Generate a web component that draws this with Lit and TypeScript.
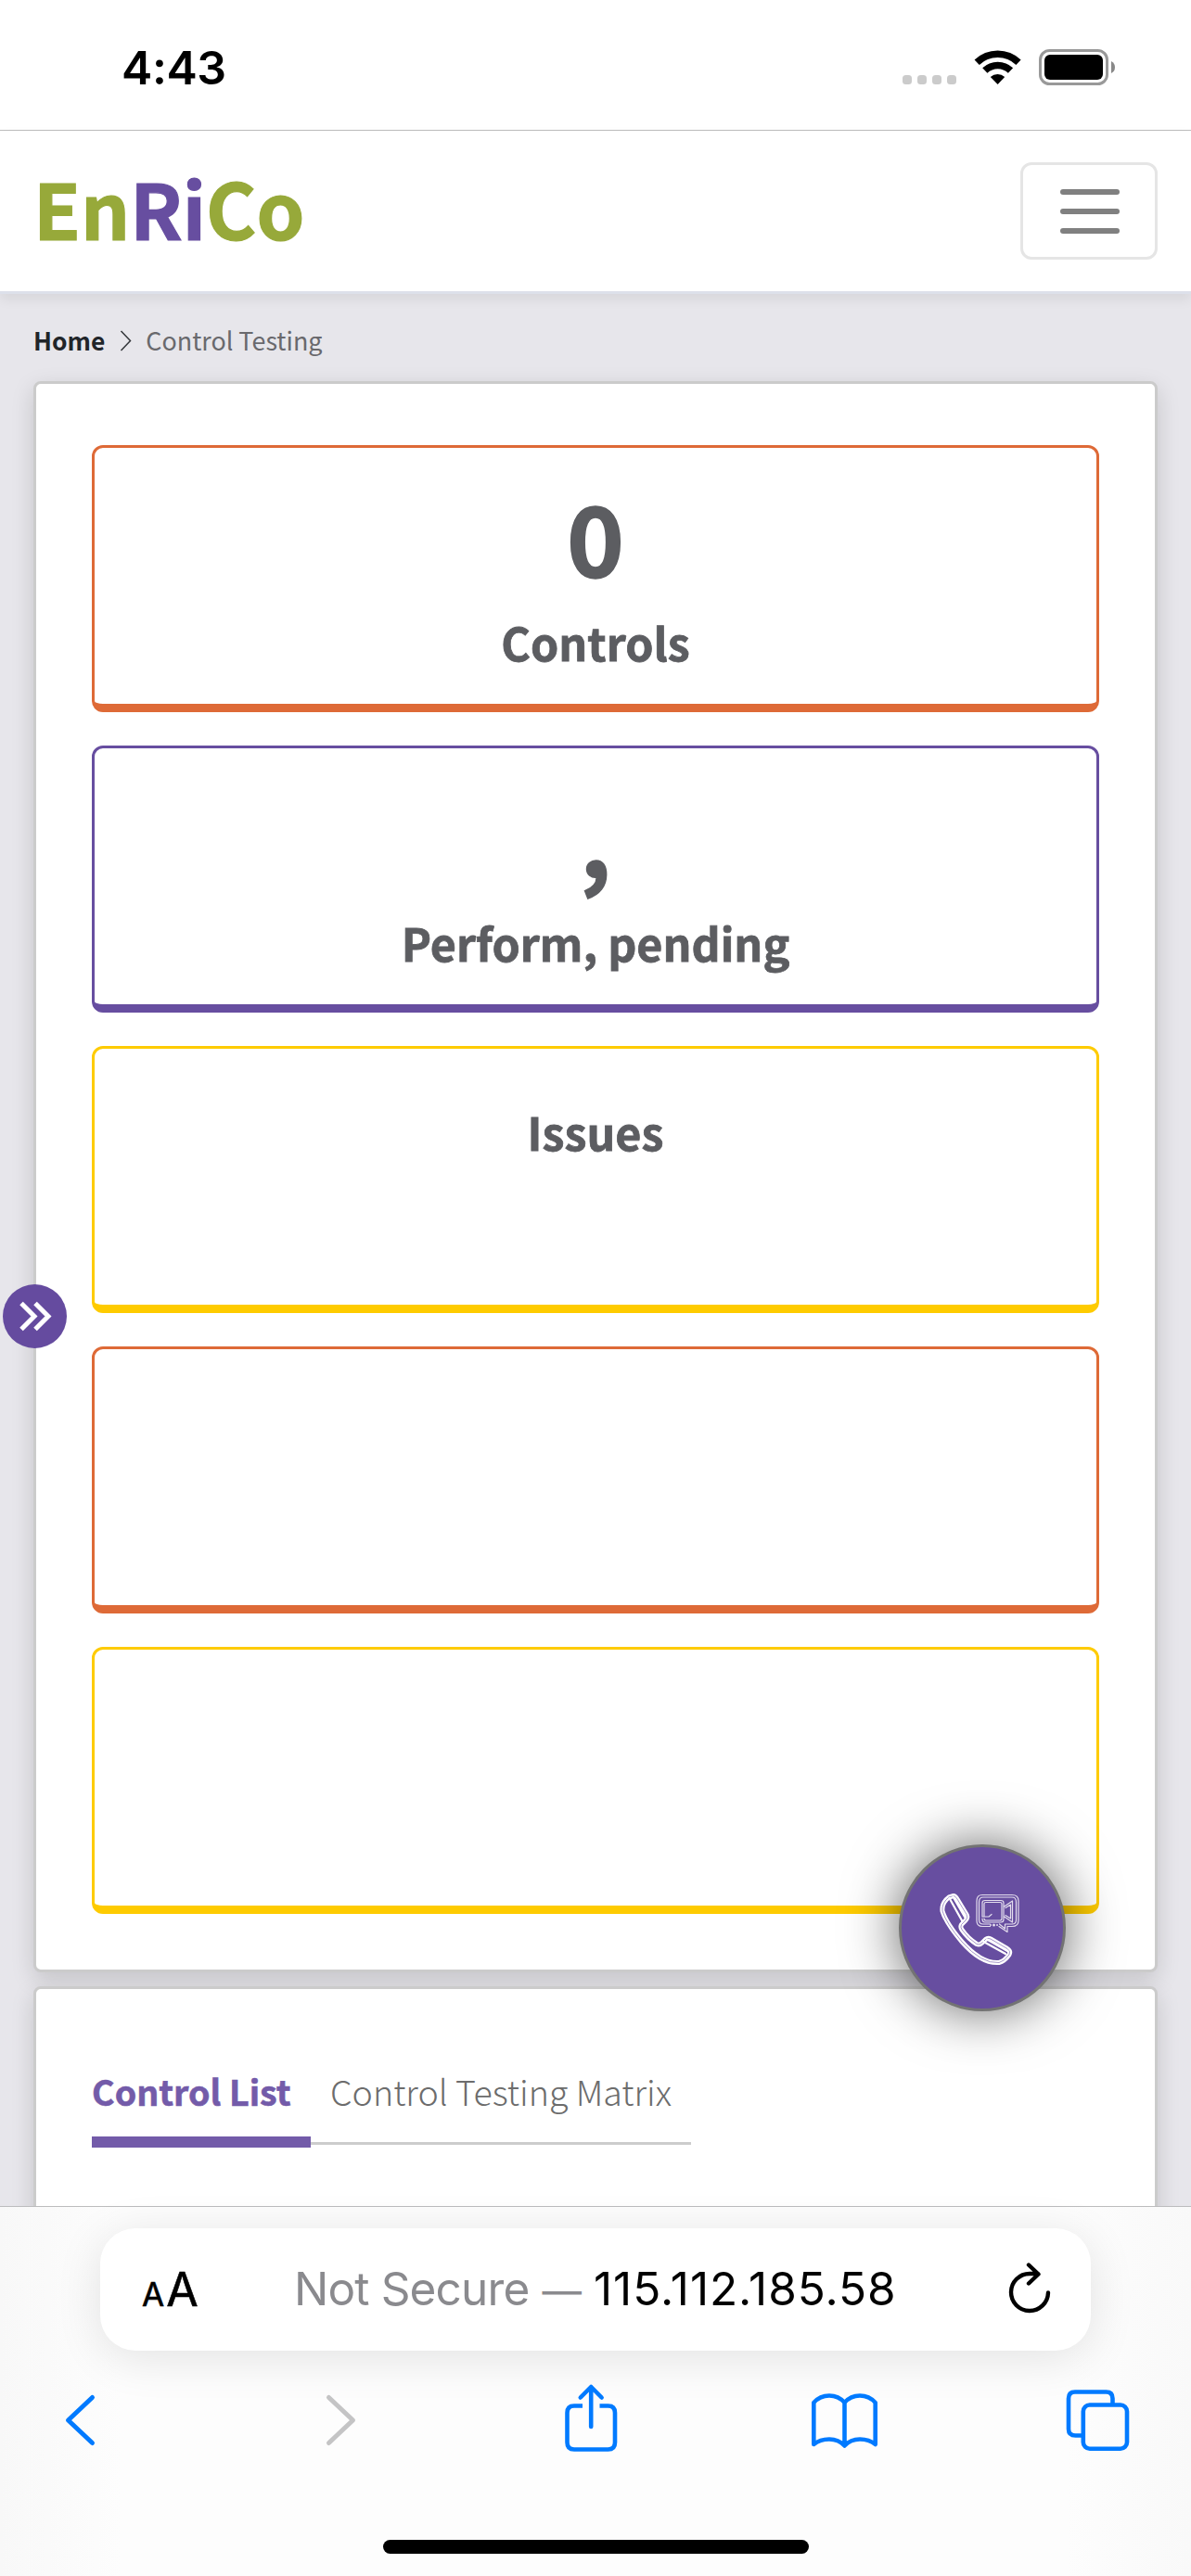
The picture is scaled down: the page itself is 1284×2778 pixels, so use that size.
import { LitElement, html, css, svg } from "lit";
import { customElement } from "lit/decorators.js";

interface Tile { tone: string; value: string; label: string; }

const tiles: Tile[] = [
  { tone: "orange", value: "0", label: "Controls" },
  { tone: "purple", value: ",", label: "Perform, pending" },
  { tone: "yellow", value: "", label: "Issues" },
  { tone: "orange", value: "", label: "" },
  { tone: "yellow", value: "", label: "" },
];

@customElement("status-bar")
export class StatusBar extends LitElement {
  static styles = css`
    :host { display: flex; box-sizing: border-box; height: 141px; border-bottom: 1px solid #bebebe; background: #fff; padding: 0 81px 0 131px; justify-content: space-between; align-items: flex-start; }
    .time { font: 600 50px/60px Inter, "Liberation Sans", sans-serif; color: #000; margin-top: 43px; letter-spacing: -0.4px; }
    svg { display: block; margin-top: 50px; }
  `;
  render() {
    return html`
      <div class="time">4:43</div>
      <svg width="231" height="44" viewBox="972 50 231 44">
        <g fill="#cbcbcb">
          ${[973, 989, 1005, 1021].map((x) => svg`<rect x=${x} y="81" width="10" height="10" rx="3.500" />`)}
        </g>
        <g fill="none" stroke="#000" stroke-width="7.600">
          <path d="M1053.2 67.2A32.5 32.5 0 0 1 1098 67.2" />
          <path d="M1061.8 76.1A20 20 0 0 1 1089.500 76.1" />
        </g>
        <path d="M1067.8 83A11.5 11.5 0 0 1 1083.2 83L1075.6 91Z" />
        <rect x="1121.500" y="54.500" width="72" height="36" rx="10" fill="none" stroke="#999" stroke-width="3" />
        <rect x="1126" y="59" width="63" height="27" rx="6" />
        <path d="M1198 66Q1202 68 1202 72.500T1198 79Z" fill="#888" />
      </svg>
    `;
  }
}

@customElement("site-header")
export class SiteHeader extends LitElement {
  static styles = css`
    :host { display: flex; box-sizing: border-box; height: 176px; padding: 0 36px; align-items: center; justify-content: space-between; background: #fff; border-bottom: 3px solid #dde0ea; box-shadow: 0 6px 12px rgba(0, 0, 0, 0.07); position: relative; }
    .logo { font: 700 83px/100px "Noto Sans CJK SC", sans-serif; color: #97a93a; margin-bottom: 10px; -webkit-text-stroke: 1.2px currentColor; }
    .mid { color: #674ea0; }
    .menu { box-sizing: border-box; width: 148px; height: 105px; border: 3px solid #e5e5e5; border-radius: 12px; display: flex; flex-direction: column; gap: 15px; align-items: center; justify-content: center; background: none; padding: 0 0 0 2px; }
    .bar { width: 64px; height: 6px; border-radius: 3px; background: #808080; }
  `;
  render() {
    return html`
      <div class="logo">En<span class="mid">Ri</span>Co</div>
      <button class="menu"><span class="bar"></span><span class="bar"></span><span class="bar"></span></button>
    `;
  }
}

@customElement("summary-tile")
export class SummaryTile extends LitElement {
  static properties = { tile: { attribute: false } };
  declare tile: Tile;
  static styles = css`
    :host { display: block; }
    .tile { box-sizing: border-box; height: 288px; border: 3px solid; border-bottom-width: 9px; border-radius: 12px; padding-top: 44px; text-align: center; font-family: "Noto Sans CJK SC", sans-serif; font-weight: 700; }
    .orange { border-color: #de6a37; }
    .purple { border-color: #674ea0; }
    .yellow { border-color: #fecb00; }
    .text { color: #5c5d61; }
    .value { font-size: 105px; line-height: 100px; height: 120px; -webkit-text-stroke: 1.5px currentColor; }
    .label { font-size: 48.4px; line-height: 90px; height: 90px; -webkit-text-stroke: 0.8px currentColor; }
  `;
  render() {
    const t = this.tile;
    return html`<div class="tile ${t.tone}">
      ${t.value ? html`<div class="text value">${t.value}</div>` : ""}
      ${t.label ? html`<div class="text label">${t.label}</div>` : ""}
    </div>`;
  }
}

@customElement("browser-bar")
export class BrowserBar extends LitElement {
  static styles = css`
    :host { display: block; box-sizing: border-box; height: 399px; border-top: 1px solid #bcbcbe; background: linear-gradient(90deg, #f8f8f8 0, #fdfdfd 130px, #fdfdfd 1150px, #f9f9f9 100%); position: relative; padding-top: 23px; }
    .address { box-sizing: border-box; height: 132px; margin: 0 108px; border-radius: 38px; background: #fff; box-shadow: 0 8px 50px rgba(0, 0, 0, 0.11); display: flex; align-items: center; padding: 0 43px 0 45px; font: 400 49.5px/60px Inter, "Liberation Sans", sans-serif; color: #000; }
    .size { display: flex; align-items: baseline; width: 164px; font-weight: 400; font-size: 50px; gap: 2px; padding-top: 4px; box-sizing: border-box; -webkit-text-stroke: 0.6px #000; }
    .small { font-size: 35px; }
    .url { flex: 1; display: flex; align-items: baseline; white-space: pre; letter-spacing: 0.95px; padding-top: 1px; }
    .muted { color: #8a8a8e; letter-spacing: -0.85px; width: 323px; }
    .dash { font-size: 42.5px; margin-left: 1px; }
    .tools { display: block; }
    .home { width: 459px; height: 15px; border-radius: 8px; background: #000; margin: 84px auto 0; }
  `;
  render() {
    return html`
      <div class="address">
        <div class="size"><span class="small">A</span><span>A</span></div>
        <div class="url"><span class="muted">Not Secure <span class="dash">— </span></span><span>115.112.185.58</span></div>
        <svg width="46" height="58" viewBox="1087 2440 46 58" fill="none" stroke="#000" stroke-width="4.400" stroke-linecap="round" stroke-linejoin="round">
          <path d="M1130 2472.500A20 20 0 1 1 1110 2452H1119M1109 2442.500L1119.500 2452.500L1109 2462.500" />
        </svg>
      </div>
      <svg class="tools" width="1284" height="120" viewBox="0 2535 1284 120" fill="none" stroke="#007aff" stroke-width="4.600" stroke-linecap="round" stroke-linejoin="round">
        <path d="M99.500 2585.500L73.500 2610L99.500 2634.500" stroke-width="5" />
        <path d="M354.500 2585.500L380.500 2610L354.500 2634.500" stroke="#c4c4c5" stroke-width="5" />
        <path d="M628 2594.500H619Q611.500 2594.500 611.500 2602V2634Q611.500 2641.500 619 2641.500H655.500Q663 2641.500 663 2634V2602Q663 2594.500 655.500 2594.500H646.500" stroke-linecap="butt" />
        <path d="M637.200 2617V2574.500M625.800 2585.500L637.200 2574L648.600 2585.500" />
        <path d="M910.500 2591Q904 2583.500 894 2583.500T877.300 2591V2636Q884 2630.500 894 2630.500T910.500 2637.500Q917 2630.500 927 2630.500T943.700 2636V2591Q937 2583.500 927 2583.500T910.500 2591V2637" />
        <path d="M1166 2626.500H1159.500Q1152 2626.500 1152 2619.500V2586.500Q1152 2579.500 1159 2579.500H1192.500Q1199.500 2579.500 1199.500 2586.500V2593" stroke-linecap="butt" />
        <rect x="1167.800" y="2593.500" width="47.200" height="47.200" rx="7" />
      </svg>
      <div class="home"></div>
    `;
  }
}

@customElement("app-root")
export class AppRoot extends LitElement {
  static styles = css`
    :host { display: flex; flex-direction: column; width: 1284px; height: 2778px; overflow: hidden; position: relative; background: #e7e6eb; font-family: "Noto Sans CJK SC", sans-serif; }
    .page { flex: 1; min-height: 0; overflow: hidden; padding: 0 36px; }
    .crumbs { display: flex; align-items: center; height: 94px; padding-top: 6px; box-sizing: border-box; font-size: 26.9px; line-height: 40px; color: #69696d; }
    .home { font-weight: 700; color: #212529; font-size: 26.4px; }
    .sep { margin: 0 15px 0 16px; }
    .card { box-sizing: border-box; border: 3px solid #cbcbcb; border-radius: 8px; background: #fff; box-shadow: 0 8px 24px rgba(0, 0, 0, 0.15); }
    .summary { height: 1716px; padding: 66px 60px 0; display: flex; flex-direction: column; gap: 36px; }
    .lists { height: 420px; margin-top: 15px; padding: 81px 60px; }
    .tabs { display: flex; width: 646px; position: relative; border-bottom: 3px solid #ccc; height: 84px; font-size: 37.6px; line-height: 57px; color: #6c6c6c; font-weight: 300; white-space: nowrap; }
    .tab { width: 236px; box-sizing: border-box; height: 90px; }
    .active { font-weight: 700; color: #735ba9; border-bottom: 12px solid #735ba9; -webkit-text-stroke: 0.6px currentColor; }
    .other { padding-left: 21px; }
    .expand { position: absolute; left: 3px; top: 1385px; }
    .call { position: absolute; left: 969px; top: 1989px; width: 180px; height: 180px; box-sizing: border-box; border: 3px solid #737373; border-radius: 50%; background: #674ea0; box-shadow: 0 0 60px rgba(0, 0, 0, 0.62); }
  `;
  render() {
    return html`
      <status-bar></status-bar>
      <site-header></site-header>
      <main class="page">
        <nav class="crumbs">
          <span class="home">Home</span>
          <svg class="sep" width="13" height="23" viewBox="0 0 13 23" fill="none" stroke="#33363a" stroke-width="1.500"><path d="M1.500 1L11.500 11.500L1.500 22" /></svg>
          <span>Control Testing</span>
        </nav>
        <section class="card summary">
          ${tiles.map((t) => html`<summary-tile .tile=${t}></summary-tile>`)}
        </section>
        <section class="card lists">
          <div class="tabs"><div class="tab active">Control List</div><div class="other">Control Testing Matrix</div></div>
        </section>
      </main>
      <browser-bar></browser-bar>
      <svg class="expand" width="69" height="69" viewBox="0 0 69 69">
        <circle cx="34.500" cy="34.500" r="34.500" fill="#654b9f" />
        <path d="M20 20.500L34 34.500L20 48.500M35 20.500L49 34.500L35 48.500" fill="none" stroke="#fff" stroke-width="5" />
      </svg>
      <div class="call">
        <svg width="174" height="174" viewBox="3 3 174 174" fill="none" stroke="#fff" stroke-linejoin="round" stroke-linecap="round">
          <path stroke-width="5" d="M54 57L59 55.500Q61 55.500 63 59L73 75.500Q75 79 72 82L67.500 86.500Q66 89 68 92Q75 102 84 107.500Q87 109 90 106L93.500 102.500Q96 100.500 99 102L117 112.500Q121 115 119 119Q114 126 108 127.500Q89 129 68 105Q51 85 47 72Q46 63 54 57Z" />
          <path stroke="#9b8bc2" stroke-width="0.900" d="M54 57L59 55.500Q61 55.500 63 59L73 75.500Q75 79 72 82L67.500 86.500Q66 89 68 92Q75 102 84 107.500Q87 109 90 106L93.500 102.500Q96 100.500 99 102L117 112.500Q121 115 119 119Q114 126 108 127.500Q89 129 68 105Q51 85 47 72Q46 63 54 57Z" />
          <path stroke-width="2.200" d="M54.500 58L68.500 83M58.500 56.500L71.500 79M91.500 105L115 118M95 102.500L118 115.500" />
          <g stroke="#e3dded" stroke-width="1.200">
            <path d="M98.500 88.500H90Q84 88.500 84 82.500V61Q84 54.500 90 54.500H122Q129 54.500 129 61V82Q129 88.500 122 88.500H117L117 94.500L108 88.500" />
            <path d="M98.500 86H91Q86.500 86 86.500 81.500V62Q86.500 57 91 57H122Q126.500 57 126.500 62V81.500Q126.500 86 122 86H114.500V91L108.500 86" />
            <path d="M90 78V63Q90 60.500 93 60.500H110Q113 60.500 113 63V81Q113 84 110 84H93Q90 84 90 80M92 78V64Q92 62.500 94 62.500H109Q111 62.500 111 64V80Q111 82 109 82H94Q92 82 92 80M90 78H97L100 75.500M113 67.500L122.500 61V84L113 77.500M115 68.500L120.500 65V80L115 76.500" />
          </g>
          <g fill="#e3dded" stroke="none"><circle cx="102.500" cy="87" r="1.500" /><circle cx="106" cy="87" r="1" /><circle cx="99" cy="87" r="1" /></g>
        </svg>
      </div>
    `;
  }
}
